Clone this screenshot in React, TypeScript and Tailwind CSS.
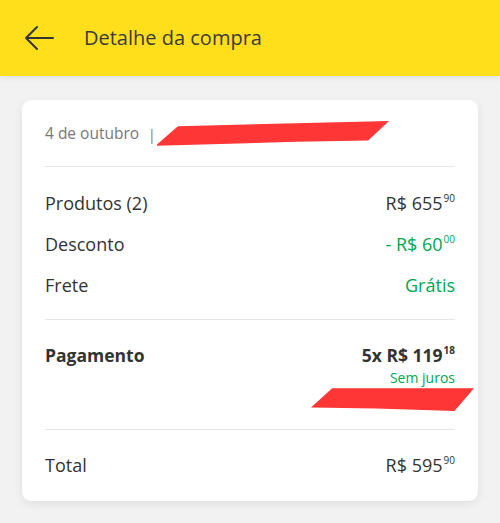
import React from "react";

function Price({ main, cents, className = "" }: { main: string; cents: string; className?: string }) {
  return (
    <span className={className}>
      {main}
      <span className="text-[10px] leading-none align-[8px] ml-[1px]">{cents}</span>
    </span>
  );
}

function Scribble({ className, d }: { className: string; d: string }) {
  return (
    <svg className={className} viewBox="0 0 100 20" preserveAspectRatio="none">
      <path d={d} fill="#ff3636" />
    </svg>
  );
}

export default function App() {
  return (
    <div className="w-[500px] h-[523px] bg-[#f2f2f2] font-['Open_Sans',sans-serif] text-[#333] overflow-hidden">
      <div className="h-[76px] bg-[#ffdf1b] flex items-center px-[24px] shadow-[0_2px_6px_rgba(0,0,0,0.08)]">
        <svg width="30" height="26" viewBox="0 0 30 26" fill="none" stroke="#333" strokeWidth="2" strokeLinecap="round" strokeLinejoin="round">
          <path d="M29 13H2M13 2L2 13l11 11" />
        </svg>
        <span className="ml-[30px] text-[20px] text-[#3a3a3a]">Detalhe da compra</span>
      </div>

      <div className="mx-[22px] mt-[24px] bg-white rounded-[9px] shadow-[0_3px_10px_rgba(0,0,0,0.08)] px-[23px]">
        <div className="h-[66px] flex items-center pt-[2px]">
          <span className="text-[15.5px] text-[#777]">4 de outubro</span>
          <span className="ml-[9px] text-[14px] text-[#777]">|</span>
          <Scribble className="w-[232px] h-[26px] ml-[1px]" d="M0 18 L9 4 L100 0 L91 15 L60 16 L0 19 Z" />
        </div>
        <div className="h-[1px] bg-[#e6e6e6]" />

        <div className="pt-[25px] pb-[22px] flex flex-col gap-[18px] text-[18px]">
          <div className="flex justify-between leading-[23px]">
            <span>Produtos (2)</span>
            <Price main="R$ 655" cents="90" />
          </div>
          <div className="flex justify-between leading-[23px]">
            <span>Desconto</span>
            <Price main="- R$ 60" cents="00" className="text-[#00a650]" />
          </div>
          <div className="flex justify-between leading-[23px]">
            <span>Frete</span>
            <span className="text-[#00a650]">Grátis</span>
          </div>
        </div>
        <div className="h-[1px] bg-[#e6e6e6]" />

        <div className="pt-[24px] pb-[18px] flex justify-between">
          <span className="text-[17.5px] font-bold leading-[23px]">Pagamento</span>
          <div className="flex flex-col items-end">
            <Price main="5x R$ 119" cents="18" className="text-[17.5px] font-bold leading-[23px]" />
            <span className="mt-[2px] text-[14px] text-[#00a650] leading-[17px]">Sem juros</span>
            <Scribble className="w-[163px] h-[24px] mr-[-19px] mt-[1px]" d="M13 1 L100 1 L88 20 L40 18 L0 17 Z" />
          </div>
        </div>
        <div className="h-[1px] bg-[#e6e6e6]" />

        <div className="h-[71px] flex justify-between items-center text-[18px]">
          <span>Total</span>
          <Price main="R$ 595" cents="90" />
        </div>
      </div>
    </div>
  );
}
